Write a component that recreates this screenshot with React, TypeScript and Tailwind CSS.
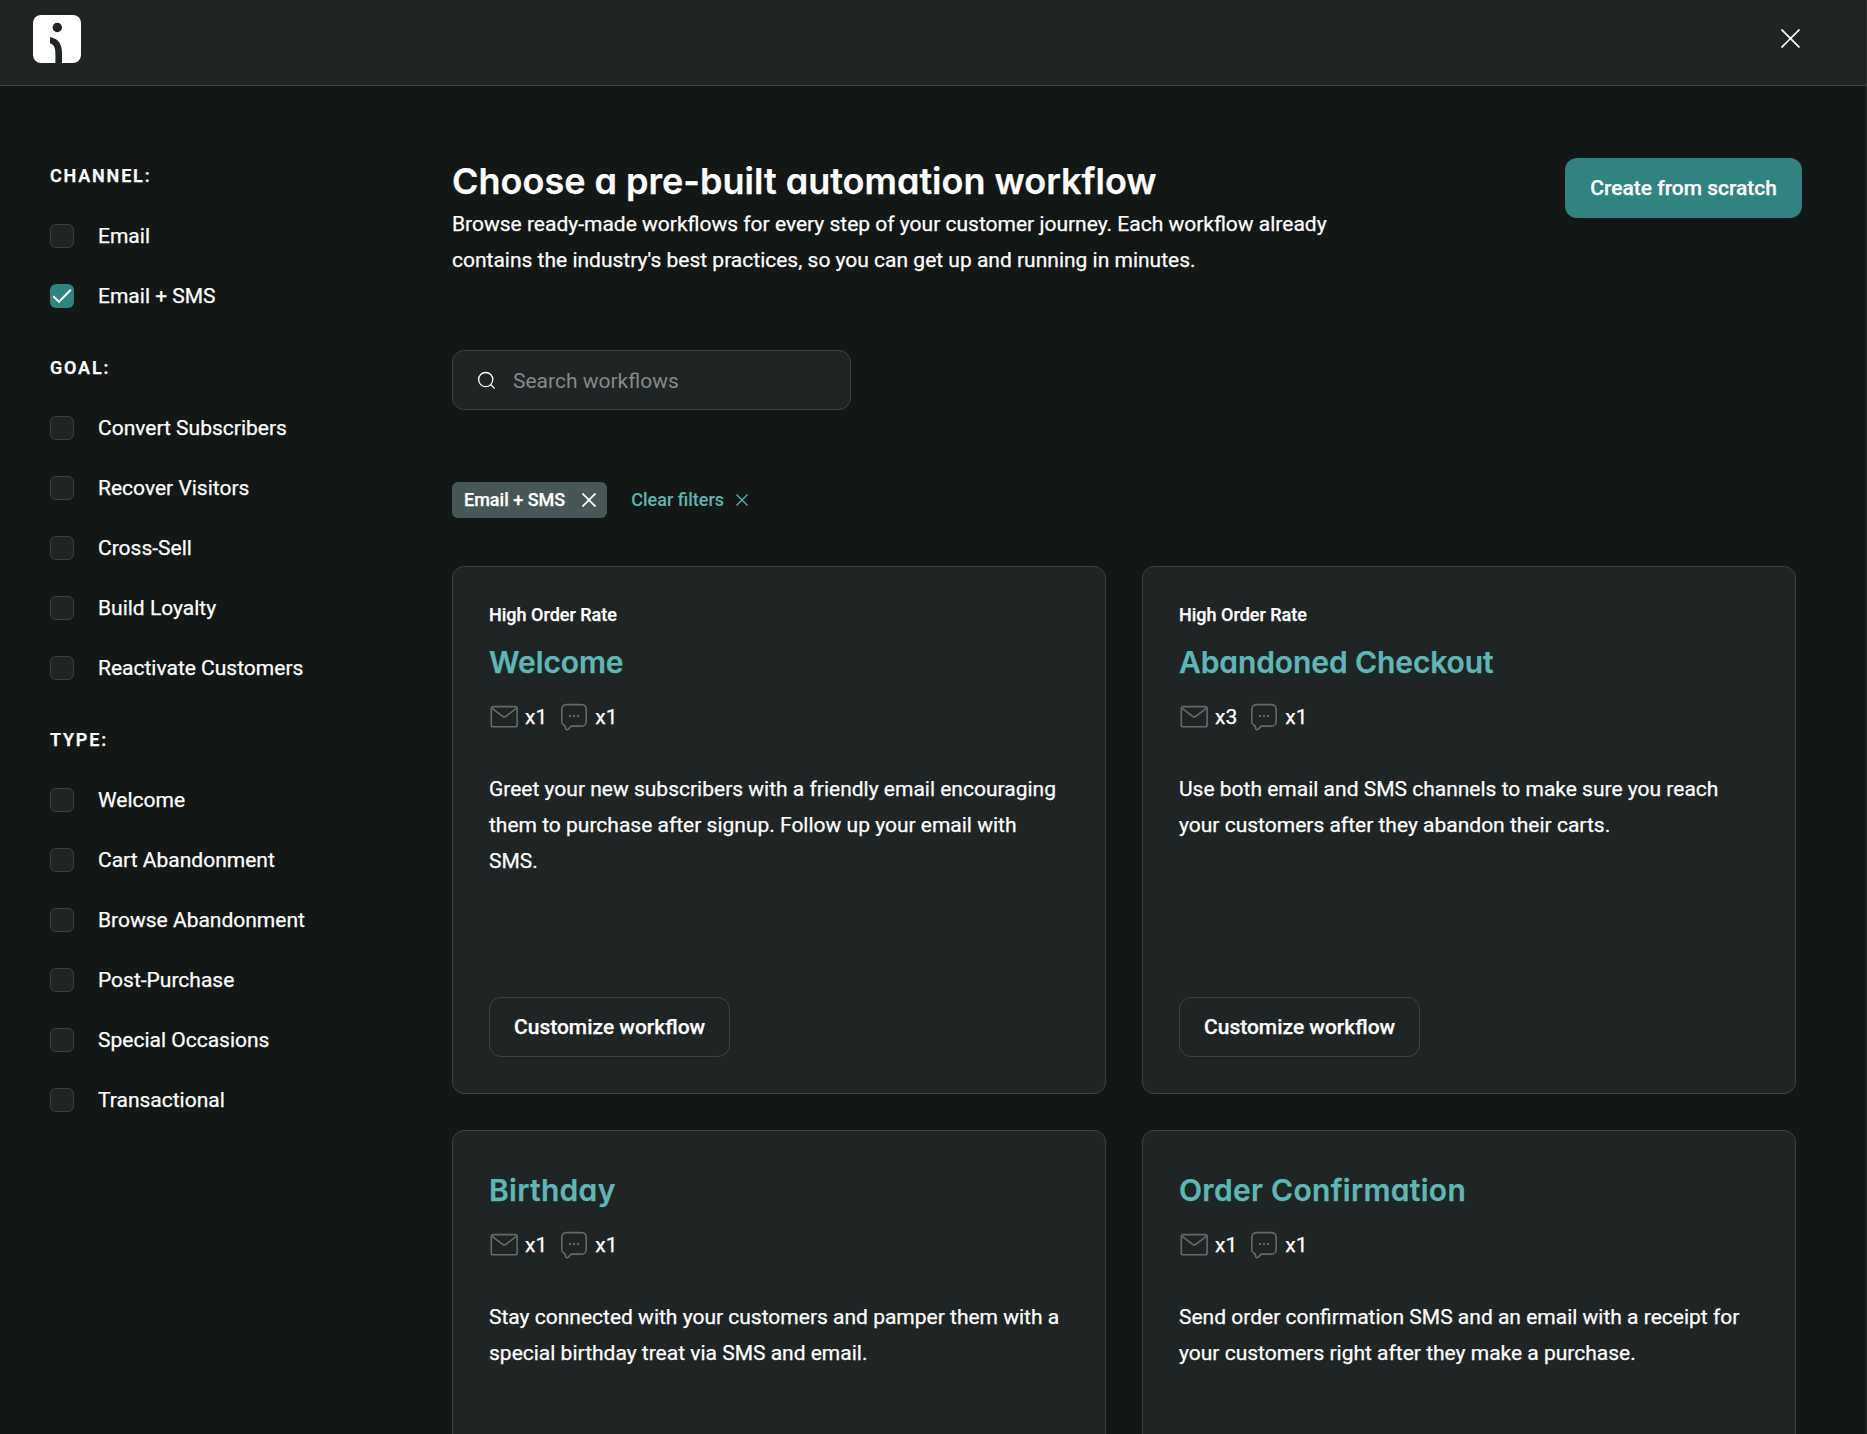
import { useState } from "react"
import clsx from "clsx"

interface FilterGroup {
  title: string
  options: string[]
}

interface Workflow {
  name: string
  label?: string
  emails: number
  sms: number
  description: string
}

const filterGroups: FilterGroup[] = [
  { title: "Channel:", options: ["Email", "Email + SMS"] },
  {
    title: "Goal:",
    options: ["Convert Subscribers", "Recover Visitors", "Cross-Sell", "Build Loyalty", "Reactivate Customers"],
  },
  {
    title: "Type:",
    options: [
      "Welcome",
      "Cart Abandonment",
      "Browse Abandonment",
      "Post-Purchase",
      "Special Occasions",
      "Transactional",
    ],
  },
]

const workflows: Workflow[] = [
  {
    name: "Welcome",
    label: "High Order Rate",
    emails: 1,
    sms: 1,
    description:
      "Greet your new subscribers with a friendly email encouraging them to purchase after signup. Follow up your email with SMS.",
  },
  {
    name: "Abandoned Checkout",
    label: "High Order Rate",
    emails: 3,
    sms: 1,
    description: "Use both email and SMS channels to make sure you reach your customers after they abandon their carts.",
  },
  {
    name: "Birthday",
    emails: 1,
    sms: 1,
    description: "Stay connected with your customers and pamper them with a special birthday treat via SMS and email.",
  },
  {
    name: "Order Confirmation",
    emails: 1,
    sms: 1,
    description:
      "Send order confirmation SMS and an email with a receipt for your customers right after they make a purchase.",
  },
]

function Logo() {
  return (
    <svg width="48" height="48" viewBox="0 0 48 48">
      <rect width="48" height="48" rx="8" fill="#fff" />
      <circle cx="24.3" cy="12.5" r="4.7" fill="#1f2424" />
      <path d="M17 22.3C24.6 23.2 29 28.4 29 38V48H22.4V38C22.4 32.6 20.6 29.2 17 28.2Z" fill="#1f2424" />
    </svg>
  )
}

function CrossIcon({ size, stroke }: { size: number; stroke: number }) {
  return (
    <svg width={size} height={size} viewBox={`0 0 ${size} ${size}`} fill="none" stroke="currentColor" strokeWidth={stroke}>
      <path d={`M0.5 0.5L${size - 0.5} ${size - 0.5}M${size - 0.5} 0.5L0.5 ${size - 0.5}`} />
    </svg>
  )
}

function SearchIcon() {
  return (
    <svg width="18" height="18" viewBox="0 0 18 18" fill="none" stroke="#fff" strokeWidth="1.3">
      <circle cx="8.7" cy="8.6" r="7.1" />
      <path d="M13.7 13.6L17.6 17.5" />
    </svg>
  )
}

function EnvelopeIcon() {
  return (
    <svg width="30" height="30" viewBox="0 0 30 30" fill="none" stroke="#646a69" strokeWidth="1.6" strokeLinejoin="round">
      <rect x="2.3" y="4.6" width="25.8" height="20.2" rx="1.9" />
      <path d="M2.8 6.2L13.9 14.5C14.7 15 15.7 15 16.5 14.5L27.6 6.2" />
    </svg>
  )
}

function MessageIcon() {
  return (
    <svg width="30" height="30" viewBox="0 0 30 30" fill="none" stroke="#646a69" strokeWidth="1.6" strokeLinejoin="round">
      <path d="M7.5 2.6H22.5C25.2 2.6 27.2 4.6 27.2 7.3V19.4C27.2 22.1 25.2 24.1 22.5 24.1H12.2L9.3 27.1C8.3 28.1 6.6 27.5 6.5 26.1L6.3 23.9C4.2 23.2 2.8 21.5 2.8 19.3V7.3C2.8 4.6 4.8 2.6 7.5 2.6Z" />
      <g fill="#646a69" stroke="none">
        <circle cx="11" cy="14" r="1.2" />
        <circle cx="15" cy="14" r="1.2" />
        <circle cx="19" cy="14" r="1.2" />
      </g>
    </svg>
  )
}

function FilterCheckbox({ label, checked, onToggle }: { label: string; checked: boolean; onToggle: () => void }) {
  return (
    <button role="checkbox" aria-checked={checked} onClick={onToggle} className="flex h-9 items-center gap-6 text-left">
      <span
        className={clsx(
          "flex size-6 items-center justify-center rounded-md",
          checked ? "bg-[#30837f]" : "border border-[#3b403f] bg-[#1f2424]"
        )}
      >
        {checked && (
          <svg width="24" height="24" viewBox="0 0 24 24" fill="none" stroke="#fff" strokeWidth="2">
            <path d="M3.2 12.2L9 17.8L20.8 5.8" />
          </svg>
        )}
      </span>
      <span>{label}</span>
    </button>
  )
}

function WorkflowCard({ workflow }: { workflow: Workflow }) {
  return (
    <article className="flex h-[528px] flex-col items-start rounded-xl border border-[#3e4342] bg-[#1f2424] p-9">
      {workflow.label && <div className="mb-3 text-lg leading-6 font-medium">{workflow.label}</div>}
      <h2
        className={clsx(
          "pb-0.5 font-[Inter,sans-serif] text-3xl leading-[46px] font-semibold text-[#5db8b5] [font-feature-settings:'cv11']",
          workflow.label ? "tracking-[-0.1px]" : "tracking-[0.3px]"
        )}
      >
        {workflow.name}
      </h2>
      <div className="mt-3 flex h-9 items-center gap-3">
        <div className="flex items-center gap-1.5">
          <EnvelopeIcon />
          <span>x{workflow.emails}</span>
        </div>
        <div className="flex items-center gap-1.5">
          <MessageIcon />
          <span>x{workflow.sms}</span>
        </div>
      </div>
      <p className="mt-9">{workflow.description}</p>
      <button className="mt-auto h-[60px] rounded-xl border border-[#3e4342] px-6 font-medium">
        Customize workflow
      </button>
    </article>
  )
}

export default function App() {
  const [selected, setSelected] = useState<string[]>(["Email + SMS"])
  const [query, setQuery] = useState("")

  const toggle = (key: string) => {
    setSelected((prev) => (prev.includes(key) ? prev.filter((k) => k !== key) : [...prev, key]))
  }

  const visible = workflows.filter((w) => w.name.toLowerCase().includes(query.toLowerCase()))

  return (
    <div className="h-screen overflow-hidden border-r border-[#2b2f2e] bg-[#131716] font-[Roboto,sans-serif] text-[21px] leading-9 text-white [-webkit-text-stroke:0.25px]">
      <header className="flex h-[86px] items-start justify-between border-b border-[#3e4342] bg-[#1f2424] pt-[15px] pr-[66px] pl-[33px]">
        <Logo />
        <button aria-label="Close" className="pt-3.5">
          <CrossIcon size={19} stroke={1.7} />
        </button>
      </header>

      <div className="flex pt-[72px] pr-16 pl-[50px]">
        <aside className="flex w-[402px] shrink-0 flex-col gap-9">
          {filterGroups.map((group) => (
            <section key={group.title} className="flex flex-col gap-6">
              <h3 className="text-lg leading-9 font-semibold tracking-[1.8px] uppercase">{group.title}</h3>
              {group.options.map((option) => (
                <FilterCheckbox
                  key={option}
                  label={option}
                  checked={selected.includes(option)}
                  onToggle={() => toggle(option)}
                />
              ))}
            </section>
          ))}
        </aside>

        <main className="flex-1">
          <div className="flex items-start justify-between">
            <div className="w-[900px]">
              <h1 className="pb-0.5 font-[Inter,sans-serif] text-4xl leading-[46px] font-semibold [font-feature-settings:'cv11']">
                Choose a pre-built automation workflow
              </h1>
              <p>
                Browse ready-made workflows for every step of your customer journey. Each workflow already contains the
                industry's best practices, so you can get up and running in minutes.
              </p>
            </div>
            <button className="h-[60px] rounded-xl bg-[#30837f] px-[25px] font-medium">Create from scratch</button>
          </div>

          <label className="mt-[72px] flex h-[60px] w-[399px] items-center gap-[18px] rounded-xl border border-[#3e4342] bg-[#1f2424] px-6">
            <SearchIcon />
            <input
              value={query}
              onChange={(e) => setQuery(e.target.value)}
              placeholder="Search workflows"
              className="min-w-0 flex-1 bg-transparent pt-0.5 outline-none [-webkit-text-stroke:0] placeholder:text-[#858a89]"
            />
          </label>

          <div className="mt-[72px] flex h-9 gap-6 text-lg leading-9 font-medium">
            {selected.map((key) => (
              <span key={key} className="flex items-center gap-[17px] rounded-md bg-[#475656] pr-[11px] pl-3">
                {key}
                <button aria-label={`Remove ${key}`} onClick={() => toggle(key)}>
                  <CrossIcon size={14} stroke={1.9} />
                </button>
              </span>
            ))}
            <button
              onClick={() => setSelected([])}
              className="flex items-center gap-3 text-[#5db8b5] [-webkit-text-stroke:0]"
            >
              Clear filters
              <CrossIcon size={12} stroke={1.2} />
            </button>
          </div>

          <div className="mt-12 mr-1.5 grid grid-cols-2 gap-9">
            {visible.map((workflow) => (
              <WorkflowCard key={workflow.name} workflow={workflow} />
            ))}
          </div>
        </main>
      </div>
    </div>
  )
}
